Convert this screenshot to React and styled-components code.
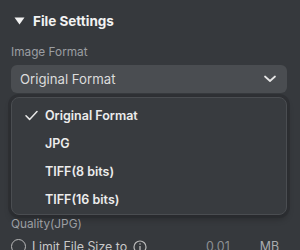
import React from "react";
import styled, { createGlobalStyle } from "styled-components";

const Global = createGlobalStyle`
  html, body { margin: 0; padding: 0; background: #36393d; }
  body { font-family: Inter, "Noto Sans", sans-serif; -webkit-font-smoothing: antialiased; }
`;

const Panel = styled.div`
  width: 300px;
  height: 250px;
  overflow: hidden;
  background: #36393d;
  box-sizing: border-box;
  padding: 12px 13px 0 11px;
  display: flex;
  flex-direction: column;
  & > * { flex-shrink: 0; }
`;

const Header = styled.div`
  display: flex;
  align-items: center;
  gap: 8px;
  padding-left: 3px;
  height: 18px;
  color: #f2f2f2;
  font-weight: 700;
  font-size: 13.5px;
`;

const Label = styled.div`
  color: #9b9ea2;
  font-size: 11.8px;
  margin-top: ${(p) => p.$mt || 0}px;
  line-height: 16px;
`;

const Select = styled.div`
  margin-top: 5px;
  height: 28px;
  border-radius: 6px;
  background: #4a4d51;
  display: flex;
  align-items: center;
  justify-content: space-between;
  padding: 0 11px 0 9px;
  color: #dcdcdc;
  font-size: 13.2px;
`;

const Menu = styled.div`
  margin-top: 4px;
  height: 118px;
  border: 1px solid #4a4d51;
  border-radius: 8px;
  background: #383b3f;
  box-shadow: 0 0 0 3px rgba(40, 42, 45, 0.55), 0 4px 6px rgba(0, 0, 0, 0.25);
  box-sizing: border-box;
  padding-top: 3px;
  display: flex;
  flex-direction: column;
`;

const Item = styled.div`
  height: 29px;
  display: flex;
  align-items: center;
  padding-left: 13px;
  color: #ececec;
  font-size: 12.5px;
  font-weight: 600;
  gap: 7px;
`;

const Check = styled.span`
  width: 13px;
  display: inline-flex;
  justify-content: center;
`;

const Row = styled.div`
  margin-top: 6px;
  display: flex;
  align-items: center;
  color: #c8c8c8;
  font-size: 12.4px;
  line-height: 17px;
  gap: 6px;
`;

const Radio = styled.span`
  width: 15px;
  height: 15px;
  box-sizing: border-box;
  border: 1.5px solid #b8b8b8;
  border-radius: 50%;
  flex-shrink: 0;
`;

const Value = styled.span`
  margin-left: auto;
  color: #8d9094;
`;

const Unit = styled.span`
  margin-left: 24px;
  margin-right: 8px;
  color: #a9abae;
`;

const Chevron = () => (
  <svg width="12" height="8" viewBox="0 0 12 8">
    <path d="M1 1.5 L6 6 L11 1.5" stroke="#e6e6e6" strokeWidth="1.7" fill="none" strokeLinecap="round" strokeLinejoin="round" />
  </svg>
);

const Tick = () => (
  <svg width="13" height="11" viewBox="0 0 13 11">
    <path d="M1 5.8 L4.6 9.4 L12 1.5" stroke="#e8e8e8" strokeWidth="1.5" fill="none" strokeLinecap="round" strokeLinejoin="round" />
  </svg>
);

const Triangle = () => (
  <svg width="11" height="8" viewBox="0 0 11 8">
    <path d="M0.5 0.5 H10.5 L5.5 7.5 Z" fill="#f2f2f2" />
  </svg>
);

const Info = () => (
  <svg width="14" height="14" viewBox="0 0 14 14">
    <circle cx="7" cy="7" r="6" stroke="#b8b8b8" strokeWidth="1.2" fill="none" />
    <path d="M7 6 V10.5" stroke="#b8b8b8" strokeWidth="1.3" />
    <circle cx="7" cy="4" r="0.8" fill="#b8b8b8" />
  </svg>
);

const items = ["Original Format", "JPG", "TIFF(8 bits)", "TIFF(16 bits)"];

export default function App() {
  return (
    <>
      <Global />
      <Panel>
        <Header>
          <Triangle />
          File Settings
        </Header>
        <Label $mt={14}>Image Format</Label>
        <Select>
          Original Format
          <Chevron />
        </Select>
        <Menu>
          {items.map((t, i) => (
            <Item key={t}>
              <Check>{i === 0 ? <Tick /> : null}</Check>
              {t}
            </Item>
          ))}
        </Menu>
        <Label $mt={1}>Quality(JPG)</Label>
        <Row>
          <Radio />
          Limit File Size to
          <Info />
          <Value>0.01</Value>
          <Unit>MB</Unit>
        </Row>
      </Panel>
    </>
  );
}
